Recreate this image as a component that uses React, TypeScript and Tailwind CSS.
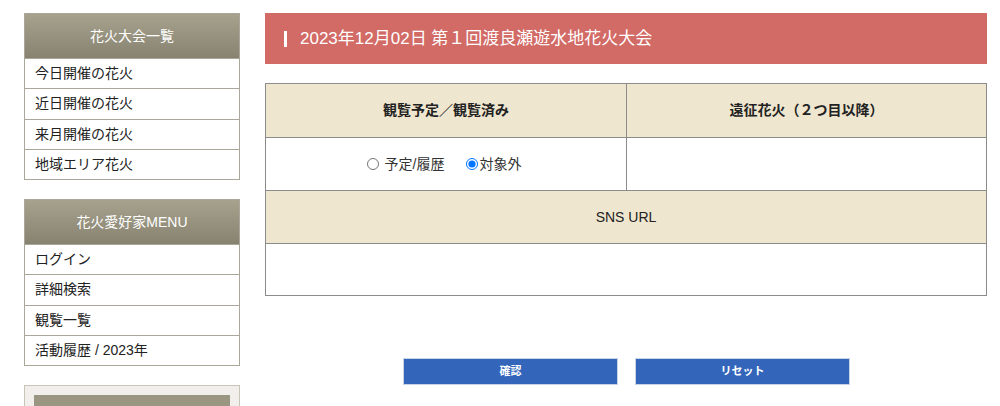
import { useState } from 'react'

const font = { fontFamily: '"Liberation Sans", "Noto Sans CJK JP", sans-serif' }

function SideMenu({ title, items }: { title: string; items: string[] }) {
  return (
    <div className="border border-[#aaa79a]">
      <div className="h-[44px] flex items-center justify-center text-white text-[14px] bg-gradient-to-b from-[#a6a28e] to-[#878370]">
        {title}
      </div>
      {items.map((item) => (
        <div
          key={item}
          className="h-[30.25px] border-t border-[#aaa79a] bg-white flex items-center px-[10px] text-[14px] text-[#222]"
        >
          {item}
        </div>
      ))}
    </div>
  )
}

export default function App() {
  const [status, setStatus] = useState('none')

  return (
    <div className="w-[1000px] h-[406px] overflow-hidden bg-white flex pt-[13px]" style={font}>
      {/* Sidebar */}
      <div className="w-[216px] ml-[24px] flex flex-col">
        <SideMenu title="花火大会一覧" items={['今日開催の花火', '近日開催の花火', '来月開催の花火', '地域エリア花火']} />
        <div className="mt-[19px]">
          <SideMenu title="花火愛好家MENU" items={['ログイン', '詳細検索', '観覧一覧', '活動履歴 / 2023年']} />
        </div>
        <div className="mt-[19px] border border-[#c8c5b8] bg-[#f0efeb] px-[9px] pt-[9px] h-[40px]">
          <div className="h-[30px] bg-[#9a9681]" />
        </div>
      </div>

      {/* Main */}
      <div className="w-[722px] ml-[25px] flex flex-col">
        <div className="h-[51px] bg-[#d26a66] flex items-center pl-[19px] text-white text-[17px]">
          <span className="w-[3px] h-[16px] bg-white mr-[13px]" />
          2023年12月02日 第１回渡良瀬遊水地花火大会
        </div>

        <div className="mt-[19px] border border-[#8c8c8c]">
          <div className="grid grid-cols-[361px_1fr]">
            <div className="h-[53px] bg-[#efe6cf] flex items-center justify-center text-[14px] font-semibold text-[#222] border-r border-[#8c8c8c]">
              観覧予定／観覧済み
            </div>
            <div className="h-[53px] bg-[#efe6cf] flex items-center justify-center text-[14px] font-semibold text-[#222]">
              遠征花火（２つ目以降）
            </div>
            <div className="h-[53px] border-t border-r border-[#8c8c8c] flex items-center justify-center text-[14px] text-[#333] pr-[4px]">
              <label className="flex items-center gap-[6px]">
                <input
                  type="radio"
                  name="status"
                  checked={status === 'plan'}
                  onChange={() => setStatus('plan')}
                  className="w-[12px] h-[12px] m-0"
                />
                予定/履歴
              </label>
              <label className="flex items-center gap-[1px] ml-[22px]">
                <input
                  type="radio"
                  name="status"
                  checked={status === 'none'}
                  onChange={() => setStatus('none')}
                  className="w-[12px] h-[12px] m-0"
                />
                対象外
              </label>
            </div>
            <div className="h-[53px] border-t border-[#8c8c8c]" />
          </div>
          <div className="h-[53px] bg-[#efe6cf] border-t border-[#8c8c8c] flex items-center justify-center text-[14px] text-[#222]">
            SNS URL
          </div>
          <div className="h-[52px] border-t border-[#8c8c8c]" />
        </div>

        <div className="mt-[62px] flex justify-center gap-[17px] pl-[1px]">
          <button className="w-[215px] h-[27px] bg-[#3366bb] border border-[#c9d3e6] text-white text-[11px] font-bold">
            確認
          </button>
          <button className="w-[215px] h-[27px] bg-[#3366bb] border border-[#c9d3e6] text-white text-[11px] font-bold">
            リセット
          </button>
        </div>
      </div>
    </div>
  )
}
